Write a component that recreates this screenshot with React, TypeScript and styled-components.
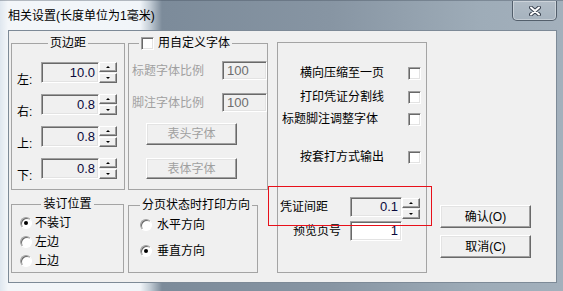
import React from "react";
import styled, { createGlobalStyle } from "styled-components";

const GlobalStyle = createGlobalStyle`
  body {
    margin: 0;
    font-family: "Liberation Sans", "Noto Sans CJK SC", sans-serif;
    font-size: 12px;
    line-height: 16px;
    color: #000;
  }
`;

const Window = styled.div`
  width: 563px;
  height: 291px;
  box-sizing: border-box;
  padding: 0 6px 8px 8px;
  display: flex;
  flex-direction: column;
  background: linear-gradient(
    90deg,
    #dfe7ef 0,
    #f3f6f9 8px,
    #f1f5f9 140px,
    #c2ccd5 150px,
    #7c8b9a 162px,
    #8795a3 330px,
    #9eacb8 480px,
    #a3b0bc 100%
  );
  border-top: 1px solid rgba(60, 72, 86, 0.35);
`;

const TitleBar = styled.div`
  height: 29px;
  display: flex;
  align-items: flex-start;
`;

const TitleText = styled.div`
  margin-top: 7px;
  font-size: 12px;
  white-space: nowrap;
`;

const CloseButton = styled.div`
  margin-left: auto;
  width: 45px;
  height: 20px;
  box-sizing: border-box;
  display: flex;
  align-items: center;
  justify-content: center;
  border: 1px solid rgba(52, 64, 78, 0.75);
  border-top: none;
  border-radius: 0 0 5px 5px;
  background: linear-gradient(rgba(255, 255, 255, 0.18), rgba(255, 255, 255, 0.06));
  box-shadow: inset 0 0 0 1px rgba(255, 255, 255, 0.35);
`;

const Client = styled.div`
  flex: 1;
  box-sizing: border-box;
  border: 1px solid #7d8a97;
  background: #f0f0f0;
  padding: 4px 0 0 2px;
  display: grid;
  grid-template-columns: 117px 149px 163px 91px;
  grid-template-rows: 155px 77px;
  row-gap: 6px;
  align-content: start;
`;

const GroupBox = styled.fieldset<{ $width: number; $col: number; $row: string; $top?: number }>`
  grid-column: ${(p) => p.$col};
  grid-row: ${(p) => p.$row};
  margin: ${(p) => p.$top ?? 0}px 0 0 0;
  padding: 0;
  min-width: 0;
  width: ${(p) => p.$width}px;
  box-sizing: border-box;
  border: 1px solid #a4a4a4;
  position: relative;
`;

const Legend = styled.legend<{ $left?: number }>`
  padding: 0 2px;
  line-height: 16px;
  margin-left: ${(p) => (p.$left === undefined ? "auto" : `${p.$left}px`)};
  margin-right: ${(p) => (p.$left === undefined ? "auto" : "0")};
  display: flex;
  align-items: center;
  gap: 4px;
`;

const Stack = styled.div<{ $pad: string; $gap?: number }>`
  display: flex;
  flex-direction: column;
  padding: ${(p) => p.$pad};
  gap: ${(p) => p.$gap ?? 0}px;
`;

const MarginRow = styled.div`
  display: flex;
  align-items: flex-start;
  height: 21px;
`;

const MarginLabel = styled.span`
  width: 24px;
  margin-top: 10px;
`;

const Field = styled.div<{ $w: number; $h: number; $bg?: string; $color?: string; $align?: string }>`
  width: ${(p) => p.$w}px;
  height: ${(p) => p.$h}px;
  box-sizing: border-box;
  border: 1px solid;
  border-color: #a0a0a0 #ffffff #ffffff #a0a0a0;
  box-shadow: inset 1px 1px 0 #696969, inset -1px -1px 0 #e3e3e3;
  background: ${(p) => p.$bg ?? "#f0f0f0"};
  color: ${(p) => p.$color ?? "#0a0a3c"};
  text-align: ${(p) => p.$align ?? "right"};
  font-size: 13px;
  line-height: ${(p) => p.$h - 2}px;
  padding: 0 3px 0 4px;
  flex-shrink: 0;
`;

const Spin = styled.div<{ $shift?: number }>`
  width: 18px;
  height: 21px;
  margin-top: ${(p) => p.$shift ?? 0}px;
  display: flex;
  flex-direction: column;
  gap: 1px;
  flex-shrink: 0;
`;

const SpinHalf = styled.div`
  flex: 1;
  box-sizing: border-box;
  border: 1px solid;
  border-color: #ffffff #696969 #696969 #ffffff;
  box-shadow: inset -1px -1px 0 #a0a0a0;
  background: #f0f0f0;
  display: flex;
  align-items: center;
  justify-content: center;
`;

const Arrow = styled.span<{ $up?: boolean }>`
  width: 0;
  height: 0;
  border-left: 2px solid transparent;
  border-right: 2px solid transparent;
  ${(p) => (p.$up ? "border-bottom: 2px solid #000;" : "border-top: 2px solid #000;")}
`;

const FontRow = styled.div<{ $top?: number }>`
  display: flex;
  align-items: center;
  justify-content: space-between;
  height: 19px;
  margin-top: ${(p) => p.$top ?? 0}px;
  padding-left: 3px;
  color: #a0a0a0;
`;

const PushButton = styled.div<{ $disabled?: boolean; $h?: number }>`
  width: 91px;
  height: ${(p) => p.$h ?? 23}px;
  box-sizing: border-box;
  border: 1px solid;
  border-color: #ffffff #696969 #696969 #ffffff;
  box-shadow: inset -1px -1px 0 #a0a0a0, inset 1px 1px 0 #e3e3e3;
  background: #f0f0f0;
  color: ${(p) => (p.$disabled ? "#a0a0a0" : "#000")};
  display: flex;
  align-items: center;
  justify-content: center;
  font-size: 12px;
`;

const CheckBox = styled.span`
  width: 13px;
  height: 13px;
  box-sizing: border-box;
  border: 1px solid;
  border-color: #a0a0a0 #ffffff #ffffff #a0a0a0;
  box-shadow: inset 1px 1px 0 #696969, inset -1px -1px 0 #e3e3e3;
  background: #fff;
  flex-shrink: 0;
`;

const CheckRow = styled.div<{ $top: number; $gap: number }>`
  display: flex;
  justify-content: flex-end;
  align-items: center;
  height: 16px;
  margin-top: ${(p) => p.$top}px;
  gap: ${(p) => p.$gap}px;
  white-space: nowrap;
`;

const ValueRow = styled.div<{ $top: number; $indent: number }>`
  display: grid;
  grid-template-columns: 72px 52px 18px;
  align-items: center;
  margin-top: ${(p) => p.$top}px;
  & > span:first-child {
    padding-left: ${(p) => p.$indent}px;
  }
`;

const RadioRow = styled.div<{ $gap: number }>`
  display: flex;
  align-items: center;
  height: 16px;
  gap: ${(p) => p.$gap}px;
`;

const Radio = styled.span<{ $on?: boolean }>`
  width: 12px;
  height: 12px;
  box-sizing: border-box;
  border-radius: 50%;
  border: 1px solid;
  border-color: #a0a0a0 #ffffff #ffffff #a0a0a0;
  box-shadow: inset 1px 1px 0 #696969;
  background: #fff;
  display: flex;
  align-items: center;
  justify-content: center;
  &::after {
    content: "";
    width: 4px;
    height: 4px;
    border-radius: 50%;
    background: ${(p) => (p.$on ? "#000" : "transparent")};
  }
`;

const ButtonColumn = styled.div`
  grid-column: 4;
  grid-row: 2;
  margin-top: 9px;
  display: flex;
  flex-direction: column;
  gap: 7px;
`;

const Highlight = styled.div`
  position: absolute;
  left: -10px;
  top: 143px;
  width: 164px;
  height: 40px;
  box-sizing: border-box;
  border: 1px solid #e8101a;
  pointer-events: none;
  z-index: 1;
`;

const SpinButtons = ({ shift }: { shift?: number }) => (
  <Spin $shift={shift}>
    <SpinHalf>
      <Arrow $up />
    </SpinHalf>
    <SpinHalf>
      <Arrow />
    </SpinHalf>
  </Spin>
);

const margins = [
  { label: "左:", value: "10.0" },
  { label: "右:", value: "0.8" },
  { label: "上:", value: "0.8" },
  { label: "下:", value: "0.8" },
];

const options = [
  { label: "横向压缩至一页", top: 22, gap: 24 },
  { label: "打印凭证分割线", top: 8, gap: 24 },
  { label: "标题脚注调整字体", top: 6, gap: 30 },
  { label: "按套打方式输出", top: 22, gap: 24 },
];

const App = () => {
  return (
    <>
      <GlobalStyle />
      <Window>
        <TitleBar>
          <TitleText>相关设置(长度单位为1毫米)</TitleText>
          <CloseButton>
            <svg width="12" height="10" viewBox="0 0 12 10">
              <path d="M2 1.5 L10 8.5 M10 1.5 L2 8.5" stroke="#3a4350" strokeWidth="4" strokeLinecap="round" />
              <path d="M2 1.5 L10 8.5 M10 1.5 L2 8.5" stroke="#ffffff" strokeWidth="2" strokeLinecap="round" />
            </svg>
          </CloseButton>
        </TitleBar>

        <Client>
          <GroupBox $width={114} $col={1} $row="1">
            <Legend>页边距</Legend>
            <Stack $pad="11px 0 0 5px" $gap={11}>
              {margins.map((m) => (
                <MarginRow key={m.label}>
                  <MarginLabel>{m.label}</MarginLabel>
                  <Field $w={58} $h={21}>
                    {m.value}
                  </Field>
                  <SpinButtons />
                </MarginRow>
              ))}
            </Stack>
          </GroupBox>

          <GroupBox $width={140} $col={2} $row="1">
            <Legend $left={10}>
              <CheckBox />
              用自定义字体
            </Legend>
            <Stack $pad="10px 0 0 0">
              <FontRow>
                标题字体比例
                <Field $w={45} $h={19} $align="left" $color="#6d6d6d">
                  100
                </Field>
              </FontRow>
              <FontRow $top={13}>
                脚注字体比例
                <Field $w={45} $h={19} $align="left" $color="#6d6d6d">
                  100
                </Field>
              </FontRow>
            </Stack>
            <Stack $pad="11px 0 0 17px" $gap={13}>
              <PushButton $disabled $h={22}>
                表头字体
              </PushButton>
              <PushButton $disabled $h={21}>
                表体字体
              </PushButton>
            </Stack>
          </GroupBox>

          <GroupBox $width={150} $col={3} $row="1 / span 2" $top={7}>
            <Stack $pad="0 5px 0 0">
              {options.map((o) => (
                <CheckRow key={o.label} $top={o.top} $gap={o.gap}>
                  <span>{o.label}</span>
                  <CheckBox />
                </CheckRow>
              ))}
            </Stack>
            <ValueRow $top={30} $indent={2}>
              <span>凭证间距</span>
              <Field $w={52} $h={20}>
                0.1
              </Field>
              <SpinButtons shift={3} />
            </ValueRow>
            <ValueRow $top={2} $indent={15}>
              <span>预览页号</span>
              <Field $w={52} $h={20} $bg="#ffffff">
                1
              </Field>
            </ValueRow>
            <Highlight />
          </GroupBox>

          <GroupBox $width={113} $col={1} $row="2">
            <Legend>装订位置</Legend>
            <Stack $pad="3px 0 0 8px" $gap={3}>
              <RadioRow $gap={3}>
                <Radio $on />
                不装订
              </RadioRow>
              <RadioRow $gap={3}>
                <Radio />
                左边
              </RadioRow>
              <RadioRow $gap={3}>
                <Radio />
                上边
              </RadioRow>
            </Stack>
          </GroupBox>

          <GroupBox $width={130} $col={2} $row="2" $top={1}>
            <Legend $left={11}>分页状态时打印方向</Legend>
            <Stack $pad="4px 0 0 11px" $gap={10}>
              <RadioRow $gap={5}>
                <Radio />
                水平方向
              </RadioRow>
              <RadioRow $gap={5}>
                <Radio $on />
                垂直方向
              </RadioRow>
            </Stack>
          </GroupBox>

          <ButtonColumn>
            <PushButton>确认(O)</PushButton>
            <PushButton>取消(C)</PushButton>
          </ButtonColumn>
        </Client>
      </Window>
    </>
  );
};

export default App;
